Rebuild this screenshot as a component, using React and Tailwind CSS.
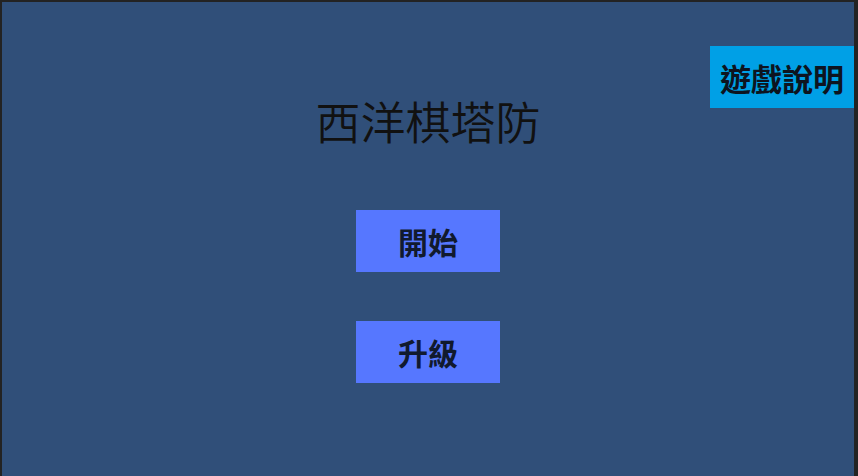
import React from "react";

const cjk = { fontFamily: '"Noto Sans CJK TC", "Noto Sans", sans-serif' };

function MenuButton({ label }) {
    return (
        <button className="w-[144px] h-[62px] bg-[#5677ff] text-[#111a2e] text-[30px] font-semibold leading-none flex items-center justify-center">
            {label}
        </button>
    );
}

export default function App() {
    return (
        <div className="w-[858px] h-[476px] bg-[#232323] pt-[2px] pl-[2px] pr-[4px]" style={cjk}>
            <div className="relative w-full h-full bg-[#304f79] flex flex-col items-center">
                <button className="absolute top-[44px] right-0 w-[144px] h-[62px] bg-[#00a0e6] text-[#0d1420] text-[31px] font-semibold leading-none flex items-center justify-center">
                    遊戲說明
                </button>

                <h1 className="mt-[96px] text-[45px] font-[350] leading-none text-[#111] tracking-normal">
                    西洋棋塔防
                </h1>

                <div className="mt-[67px] flex flex-col gap-[49px]">
                    <MenuButton label="開始" />
                    <MenuButton label="升級" />
                </div>
            </div>
        </div>
    );
}
